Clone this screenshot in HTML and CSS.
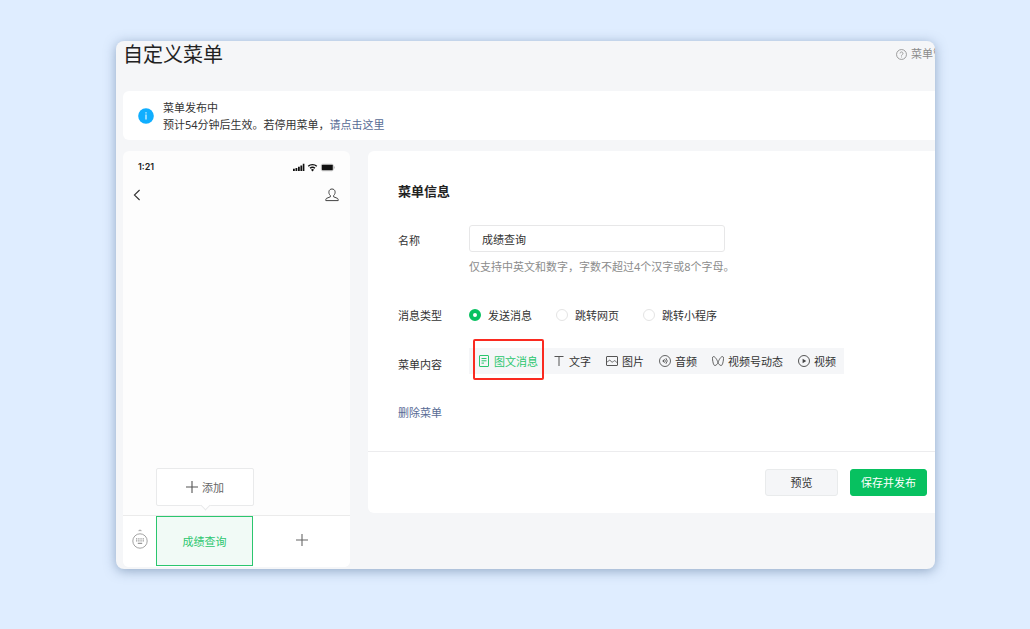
FILE: index.html
```html
<!DOCTYPE html>
<html lang="zh-CN">
<head>
<meta charset="utf-8">
<title>自定义菜单</title>
<link rel="stylesheet" href="styles.css">
</head>
<body>
<div class="window">
  <header class="header">
    <h1 class="title">自定义菜单</h1>
    <a class="help" href="#">
      <svg width="11" height="11" viewBox="0 0 12 12" fill="none" stroke="currentColor"><circle cx="6" cy="6" r="5.4" stroke-width=".9"/><path d="M4.4 4.8a1.6 1.6 0 1 1 2.4 1.4c-.6.3-.8.6-.8 1.1M6 8.2v1" stroke-width=".9"/></svg>
      <span>菜单管</span>
    </a>
  </header>

  <section class="notice">
    <svg width="16" height="16" viewBox="0 0 16 16"><circle cx="8" cy="8" r="7.8" fill="#10aeff"/><path d="M8 6.6v4.8M8 4.2v1.3" stroke="#fff" stroke-width="1.1"/></svg>
    <div class="notice-text">
      <p>菜单发布中</p>
      <p>预计54分钟后生效。若停用菜单，<a href="#">请点击这里</a></p>
    </div>
  </section>

  <main class="content">
    <section class="phone">
      <div class="status">
        <span class="time">1:21</span>
        <svg width="42" height="9" viewBox="0 0 42 9">
          <path d="M0 5.8h1.8v2.2H0zM2.5 5h1.8v3H2.5zM5 3.8h1.8V8H5zM7.4 2.4h1.8V8H7.4zM9.8.8h1.6V8H9.8z" fill="#111"/>
          <path d="M15.2 3.3a6.4 6.4 0 0 1 8.6 0M17 5.3a3.8 3.8 0 0 1 5 0" fill="none" stroke="#111" stroke-width="1.4"/>
          <path d="M18 6.8a2.2 2.2 0 0 1 3 0L19.5 8.4z" fill="#111"/>
          <rect x="28.3" y="1.2" width="12" height="6.6" rx="1.4" fill="none" stroke="#aaa" stroke-width=".6"/>
          <rect x="28.8" y="1.8" width="11" height="5.4" rx=".8" fill="#111"/><path d="M41.3 3.5v2" stroke="#aaa" stroke-width=".8"/>
        </svg>
      </div>
      <div class="nav">
        <svg width="8" height="12" viewBox="0 0 8 12" fill="none" stroke="#333" stroke-width="1.1"><path d="M6.6 1 1.4 6l5.2 5"/></svg>
        <svg width="14" height="14" viewBox="0 0 14 14" fill="none" stroke="#444" stroke-width="1"><path d="M5.400 7.600C3.900 6.200 3.700 4.500 4 3.300 4.300 1.800 5.500 1 7 1s2.700.8 3 2.300c.3 1.200.1 2.900-1.400 4.300v1.200l3.700 1.500c.7.3.9.7.9 1.300v1H.8v-1c0-.6.2-1 .9-1.300l3.700-1.500z"/></svg>
      </div>
      <div class="submenu">
        <button class="add" type="button">
          <svg width="12" height="12" viewBox="0 0 12 12" stroke="#555" stroke-width="1.1"><path d="M6 0v12M0 6h12"/></svg>
          <span>添加</span>
        </button>
      </div>
      <div class="bar">
        <div class="keyboard">
          <svg width="16" height="20" viewBox="0 0 16 20" fill="none" stroke="#999"><path d="M6.400 1.800 8 .7l1.600 1.100z" fill="#999" stroke-width=".3"/><circle cx="8" cy="12" r="7.200" stroke-width=".9"/><path d="M4 9.800h8M4 11.800h8" stroke-width="1.300" stroke-dasharray="1.300 .9"/><path d="M5.800 14.400h4.400" stroke-width="1.200"/></svg>
        </div>
        <button class="slot slot-active" type="button">成绩查询</button>
        <button class="slot" type="button" aria-label="添加菜单">
          <svg width="12" height="12" viewBox="0 0 12 12" stroke="#666" stroke-width="1.1"><path d="M6 0v12M0 6h12"/></svg>
        </button>
      </div>
    </section>

    <form class="panel">
      <div class="fields">
        <h2 class="heading">菜单信息</h2>
        <div class="row row-name">
          <label class="label" for="name">名称</label>
          <div class="control">
            <input class="text" id="name" type="text" value="成绩查询">
            <p class="hint">仅支持中英文和数字，字数不超过4个汉字或8个字母。</p>
          </div>
        </div>
        <div class="row row-type">
          <span class="label">消息类型</span>
          <div class="radios">
            <label class="choice"><input type="radio" name="type" checked>发送消息</label>
            <label class="choice"><input type="radio" name="type">跳转网页</label>
            <label class="choice"><input type="radio" name="type">跳转小程序</label>
          </div>
        </div>
        <div class="row row-content">
          <span class="label">菜单内容</span>
          <div class="tabs">
            <button class="tab tab-active" type="button">
              <svg width="12" height="12" viewBox="0 0 12 12" fill="none" stroke="currentColor"><rect x="1.500" y=".5" width="9" height="11" rx=".5"/><path d="M3.500 3.500h5M3.500 5.800h5M3.500 8.100h2.500"/></svg>图文消息</button>
            <button class="tab" type="button">
              <svg width="12" height="12" viewBox="0 0 12 12" fill="none" stroke="#555"><path d="M1.500 1.500h9M6 1.500V11"/></svg>文字</button>
            <button class="tab" type="button">
              <svg width="12" height="12" viewBox="0 0 12 12" fill="none" stroke="#555"><rect x=".5" y="1.500" width="11" height="9" rx=".5"/><path d="M.5 7.500C2 7 2.600 5 3.800 5.200c1.200.2 1.200 2 2.400 2 1 0 1.300-1.500 2.300-1.500s1.500 1.700 3 1.800" stroke-width=".9"/></svg>图片</button>
            <button class="tab" type="button">
              <svg width="12" height="12" viewBox="0 0 12 12" fill="none" stroke="#555" stroke-width=".9"><circle cx="6" cy="6" r="5.500"/><path d="M3.200 6 5 4.500v3z" fill="#555" stroke="none"/><path d="M5.500 4.200a2.600 2.600 0 0 1 0 3.600M6.900 3.200a4 4 0 0 1 0 5.600"/></svg>音频</button>
            <button class="tab" type="button">
              <svg width="12" height="12" viewBox="0 0 12 12" fill="none" stroke="#555"><path d="M6 7.500C5 4.500 3 1.500 1.500 1.500c-1.400 0-1.100 3-.6 5.200.4 2 .9 3.800 2 3.800C4.300 10.500 5.400 9 6 7.500 7 4.500 9 1.500 10.500 1.500c1.400 0 1.100 3 .6 5.200-.4 2-.9 3.800-2 3.800C7.700 10.500 6.600 9 6 7.500z" stroke-width=".9"/></svg>视频号动态</button>
            <button class="tab" type="button">
              <svg width="12" height="12" viewBox="0 0 12 12" fill="none" stroke="#555"><circle cx="6" cy="6" r="5.500"/><path d="M4.600 3.800 8.300 6 4.600 8.200z" fill="#444" stroke="none"/></svg>视频</button>
            <span class="marker"></span>
          </div>
        </div>
        <a class="remove" href="#">删除菜单</a>
      </div>
      <footer class="actions">
        <button class="button" type="button">预览</button>
        <button class="button button-primary" type="submit">保存并发布</button>
      </footer>
    </form>
  </main>
</div>
</body>
</html>
```
FILE: styles.css
```css
* {
  box-sizing: border-box;
}

body {
  margin: 0;
  padding: 41px 95px 60px 116px;
  background: #dfedff;
  color: #333;
  font: 11px/17px "Noto Sans", "Noto Sans CJK SC", sans-serif;
}

h1, h2, p {
  margin: 0;
}

a {
  color: #576b95;
  text-decoration: none;
}

button, input {
  font: inherit;
  color: inherit;
}

button {
  padding: 0;
  border: 0;
  background: none;
}

svg {
  display: block;
  flex: none;
}

.window {
  padding: 0 0 2px 7px;
  overflow: hidden;
  border-radius: 8px;
  background: #f5f6f8;
  box-shadow: 0 2px 12px rgba(70, 100, 140, 0.5);
}

.header {
  display: flex;
  justify-content: space-between;
  align-items: flex-start;
  height: 50px;
}

.title {
  font-size: 20px;
  font-weight: 400;
  line-height: 28px;
  color: #222;
}

.help {
  display: flex;
  align-items: center;
  gap: 4px;
  margin-right: -9px;
  line-height: 26px;
  color: #8a8a8a;
  white-space: nowrap;
}

.notice {
  display: flex;
  align-items: center;
  gap: 9px;
  padding: 8px 15px 7px;
  border-radius: 6px 0 0 6px;
  background: #fff;
}

.content {
  display: flex;
  align-items: flex-start;
  gap: 18px;
  margin-top: 11px;
}

.phone {
  display: flex;
  flex-direction: column;
  flex: none;
  width: 227px;
  min-height: 416px;
  overflow: hidden;
  border-radius: 6px;
  background: #fdfdfd;
}

.status, .nav {
  display: flex;
  justify-content: space-between;
  align-items: center;
}

.status {
  height: 32px;
  padding: 0 15px;
}

.time {
  font: 600 9px/12px Inter, sans-serif;
  color: #222;
}

.nav {
  height: 24px;
  padding: 0 11px 0 10px;
}

.submenu {
  margin-top: auto;
  padding: 0 0 9px 33px;
}

.add {
  position: relative;
  display: flex;
  justify-content: center;
  align-items: center;
  gap: 4px;
  width: 98px;
  height: 38px;
  border: 1px solid #e9eaeb;
  border-radius: 2px;
  background: #fff;
  color: #666;
}

.add::after {
  content: "";
  position: absolute;
  bottom: -4px;
  left: 45px;
  width: 6px;
  height: 6px;
  border: solid #e9eaeb;
  border-width: 0 1px 1px 0;
  background: #fff;
  transform: rotate(45deg);
}

.bar {
  display: grid;
  grid-template-columns: 33px 1fr 1fr;
  height: 52px;
  padding-bottom: 1px;
  border-top: 1px solid #ebebeb;
  background: #fff;
}

.keyboard, .slot {
  display: flex;
  align-items: center;
  justify-content: center;
}

.keyboard {
  padding-bottom: 4px;
}

.slot {
  padding-bottom: 2px;
}

.slot-active {
  padding: 0;
  border: 1px solid #2bc66e;
  background: #f1faf6;
  color: #2bc66e;
}

.panel {
  flex: 1;
  min-width: 0;
  border-radius: 6px 0 0 6px;
  background: #fff;
}

.fields {
  padding: 30px 30px 30px;
}

.heading {
  font-size: 13px;
  font-weight: 700;
  line-height: 20px;
  color: #222;
}

.row {
  display: flex;
}

.label {
  flex: none;
  width: 71px;
}

.row-name {
  margin-top: 24px;
}

.row-name .label {
  padding-top: 7px;
}

.text {
  display: block;
  width: 256px;
  height: 27px;
  padding: 0 12px;
  border: 1px solid #e7e7e8;
  border-radius: 3px;
  background: #fff;
}

.hint {
  margin-top: 6px;
  color: #8c8c8c;
  white-space: nowrap;
}

.row-type {
  margin-top: 32px;
}

.radios {
  display: flex;
  gap: 24px;
}

.choice {
  display: flex;
  align-items: center;
  gap: 7px;
  white-space: nowrap;
}

.choice input {
  appearance: none;
  width: 12px;
  height: 12px;
  margin: 0 0 1px;
  border: 1px solid #e4e4e4;
  border-radius: 50%;
  background: #fff;
}

.choice input:checked {
  border: 4px solid #07c160;
}

.row-content {
  align-items: flex-start;
  margin-top: 24px;
}

.row-content .label {
  padding-top: 8px;
}

.tabs {
  position: relative;
  display: flex;
  gap: 15px;
  height: 26px;
  padding: 0 8px 0 9px;
  background: #f5f6f8;
}

.tab {
  display: flex;
  align-items: center;
  gap: 4px;
  white-space: nowrap;
}

.tab-active {
  color: #2bc66e;
}

.marker {
  position: absolute;
  top: -9px;
  left: 4px;
  width: 71px;
  height: 41px;
  border: 2px solid #fa2a20;
  border-radius: 2px;
}

.remove {
  display: inline-block;
  margin-top: 30px;
}

.actions {
  display: flex;
  justify-content: flex-end;
  gap: 12px;
  padding: 17px 8px;
  border-top: 1px solid #ececee;
}

.button {
  width: 73px;
  height: 27px;
  border: 1px solid #e9ebec;
  border-radius: 3px;
  background: #f5f6f8;
}

.button-primary {
  width: 77px;
  border-color: #07c160;
  background: #07c160;
  color: #fff;
}
```
